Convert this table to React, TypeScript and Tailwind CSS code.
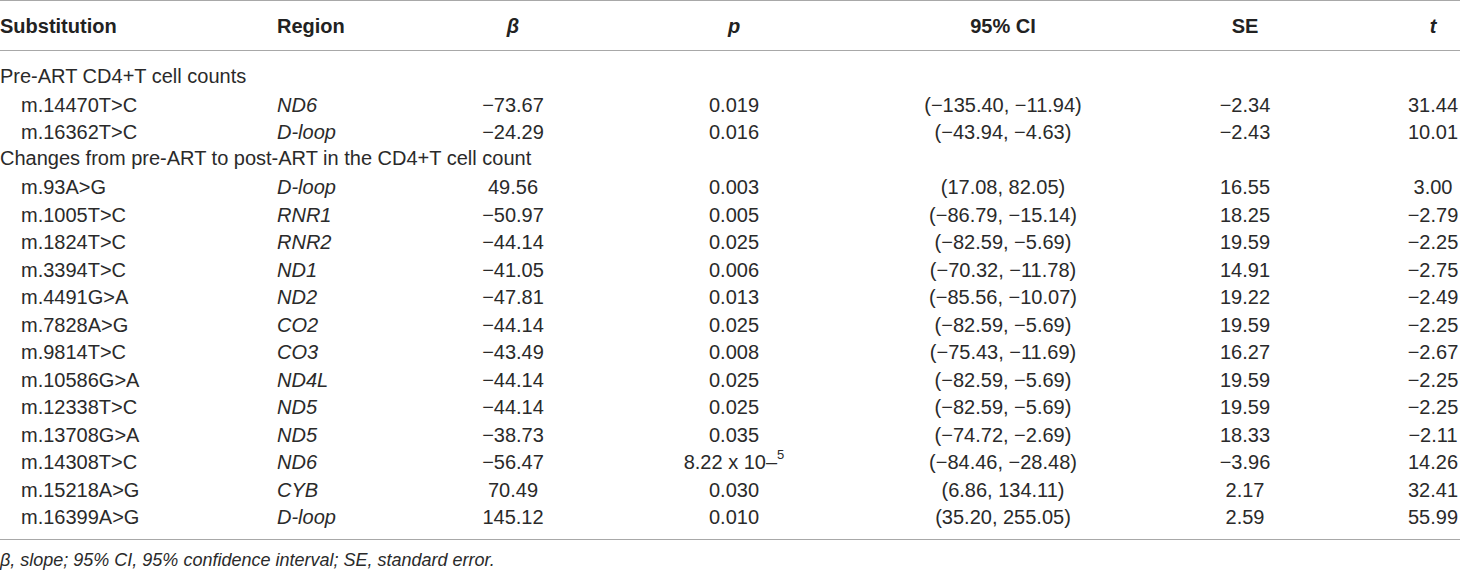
import React from "react";

type Row =
  | { kind: "section"; label: string }
  | {
      kind: "data";
      sub: string;
      region: string;
      beta: string;
      p: React.ReactNode;
      ci: string;
      se: string;
      t: string;
    };

const rows: Row[] = [
  { kind: "section", label: "Pre-ART CD4+T cell counts" },
  { kind: "data", sub: "m.14470T>C", region: "ND6", beta: "−73.67", p: "0.019", ci: "(−135.40, −11.94)", se: "−2.34", t: "31.44" },
  { kind: "data", sub: "m.16362T>C", region: "D-loop", beta: "−24.29", p: "0.016", ci: "(−43.94, −4.63)", se: "−2.43", t: "10.01" },
  { kind: "section", label: "Changes from pre-ART to post-ART in the CD4+T cell count" },
  { kind: "data", sub: "m.93A>G", region: "D-loop", beta: "49.56", p: "0.003", ci: "(17.08, 82.05)", se: "16.55", t: "3.00" },
  { kind: "data", sub: "m.1005T>C", region: "RNR1", beta: "−50.97", p: "0.005", ci: "(−86.79, −15.14)", se: "18.25", t: "−2.79" },
  { kind: "data", sub: "m.1824T>C", region: "RNR2", beta: "−44.14", p: "0.025", ci: "(−82.59, −5.69)", se: "19.59", t: "−2.25" },
  { kind: "data", sub: "m.3394T>C", region: "ND1", beta: "−41.05", p: "0.006", ci: "(−70.32, −11.78)", se: "14.91", t: "−2.75" },
  { kind: "data", sub: "m.4491G>A", region: "ND2", beta: "−47.81", p: "0.013", ci: "(−85.56, −10.07)", se: "19.22", t: "−2.49" },
  { kind: "data", sub: "m.7828A>G", region: "CO2", beta: "−44.14", p: "0.025", ci: "(−82.59, −5.69)", se: "19.59", t: "−2.25" },
  { kind: "data", sub: "m.9814T>C", region: "CO3", beta: "−43.49", p: "0.008", ci: "(−75.43, −11.69)", se: "16.27", t: "−2.67" },
  { kind: "data", sub: "m.10586G>A", region: "ND4L", beta: "−44.14", p: "0.025", ci: "(−82.59, −5.69)", se: "19.59", t: "−2.25" },
  { kind: "data", sub: "m.12338T>C", region: "ND5", beta: "−44.14", p: "0.025", ci: "(−82.59, −5.69)", se: "19.59", t: "−2.25" },
  { kind: "data", sub: "m.13708G>A", region: "ND5", beta: "−38.73", p: "0.035", ci: "(−74.72, −2.69)", se: "18.33", t: "−2.11" },
  {
    kind: "data",
    sub: "m.14308T>C",
    region: "ND6",
    beta: "−56.47",
    p: (
      <span>
        8.22 x 10–<sup className="relative top-[-2px] align-super text-[13px] leading-none">5</sup>
      </span>
    ),
    ci: "(−84.46, −28.48)",
    se: "−3.96",
    t: "14.26",
  },
  { kind: "data", sub: "m.15218A>G", region: "CYB", beta: "70.49", p: "0.030", ci: "(6.86, 134.11)", se: "2.17", t: "32.41" },
  { kind: "data", sub: "m.16399A>G", region: "D-loop", beta: "145.12", p: "0.010", ci: "(35.20, 255.05)", se: "2.59", t: "55.99" },
];

const gridCols = "grid grid-cols-[277px_163px_146px_296px_242px_282px_54px]";

export default function App() {
  return (
    <div
      className="w-[1460px] bg-white text-[#2a2a2a]"
      style={{ fontFamily: '"Liberation Sans", Arial, Helvetica, sans-serif' }}
    >
      <div className="border-t border-[#a8a8a8]">
        <div className={`${gridCols} h-[50px] items-center border-b border-[#a8a8a8] text-[20px] font-bold whitespace-nowrap text-[#222]`}>
          <div>Substitution</div>
          <div>Region</div>
          <div className="text-center italic">β</div>
          <div className="text-center italic">p</div>
          <div className="text-center">95% CI</div>
          <div className="pr-[40px] text-center">SE</div>
          <div className="text-center italic">t</div>
        </div>
        <div className="border-b border-[#a8a8a8] pt-[11px] pb-[9px] text-[20px] whitespace-nowrap">
          {rows.map((r, i) =>
            r.kind === "section" ? (
              <div key={i} className="flex h-[27.5px] items-center">
                {r.label}
              </div>
            ) : (
              <div key={i} className={`${gridCols} h-[27.5px] items-center`}>
                <div className="pl-[21px]">{r.sub}</div>
                <div className="italic">{r.region}</div>
                <div className="text-center">{r.beta}</div>
                <div className="text-center">{r.p}</div>
                <div className="text-center">{r.ci}</div>
                <div className="pr-[40px] text-center">{r.se}</div>
                <div className="text-center">{r.t}</div>
              </div>
            )
          )}
        </div>
      </div>
      <div className="pt-[9px] text-[18px] italic leading-[22px]">
        β, slope; 95% CI, 95% confidence interval; SE, standard error.
      </div>
    </div>
  );
}
